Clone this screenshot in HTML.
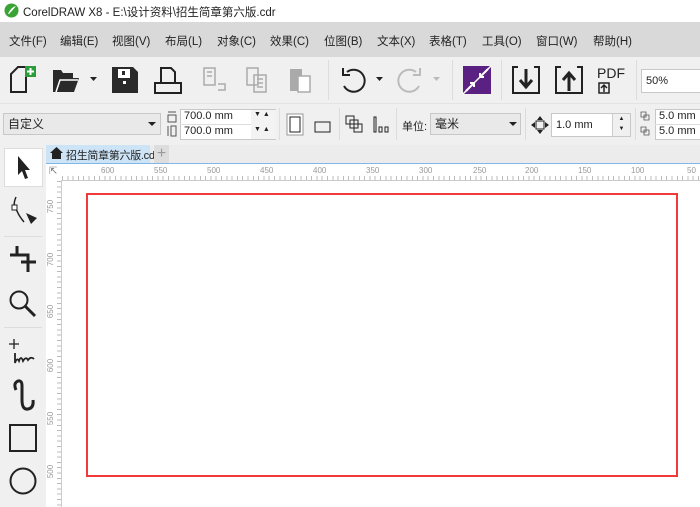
<!DOCTYPE html>
<html><head><meta charset="utf-8"><style>
*{margin:0;padding:0;box-sizing:border-box}
body{width:700px;height:507px;overflow:hidden;background:#f0f0f0;font-family:"Liberation Sans","Noto Sans CJK SC",sans-serif;position:relative;font-size:12px;color:#222}
.a{position:absolute}
.menu span{position:absolute;top:11px;font-size:11.5px;color:#222}
.inp{position:absolute;background:#fff;border:1px solid #c8c8c8;font-size:11px;padding-left:4px;line-height:18px}
.rl{position:absolute;font-size:8px;color:#999}
svg{position:absolute;overflow:visible}
</style></head><body>
<div class="a" style="left:0;top:0;width:700px;height:22px;background:#fff"></div>
<svg style="left:4px;top:3px" width="15" height="15"><circle cx="7.5" cy="7.5" r="7" fill="#3aa335"/><path d="M4 11 Q7 4 12 3 Q9 7 5 11Z" fill="#fff"/></svg>
<div class="a" style="left:23px;top:4px;font-size:11.5px">CorelDRAW X8 - E:\设计资料\招生简章第六版.cdr</div>
<div class="a menu" style="left:0;top:22px;width:700px;height:35px;background:#d9d9d9">
<span style="left:9px">文件(F)</span><span style="left:60px">编辑(E)</span><span style="left:112px">视图(V)</span><span style="left:165px">布局(L)</span><span style="left:217px">对象(C)</span><span style="left:270px">效果(C)</span><span style="left:324px">位图(B)</span><span style="left:377px">文本(X)</span><span style="left:429px">表格(T)</span><span style="left:482px">工具(O)</span><span style="left:536px">窗口(W)</span><span style="left:593px">帮助(H)</span>
</div>
<svg style="left:10px;top:66px" width="30" height="28"><path d="M1 26V8L8 1H16V26Z" fill="none" stroke="#222" stroke-width="2"/><rect x="15" y="0" width="11" height="11" fill="#2a9d3a"/><path d="M20.5 2V9M17 5.5H24" stroke="#fff" stroke-width="2"/></svg>
<svg style="left:52px;top:68px" width="40" height="26"><path d="M1 24V2H9L11 5H21V10H27L22 24Z" fill="#2a2a2a"/><path d="M4 24L8 12H26" fill="none" stroke="#fff" stroke-width="1.5"/><path d="M38 9H45L41.5 13Z" fill="#222"/></svg>
<svg style="left:111px;top:66px" width="28" height="28"><path d="M1 1H22L27 6V27H1Z" fill="#2a2a2a"/><rect x="7" y="3" width="12" height="9" fill="#fff"/><rect x="11" y="5" width="3" height="4" fill="#2a2a2a"/><rect x="12" y="15" width="3" height="3" fill="#fff"/></svg>
<svg style="left:154px;top:67px" width="28" height="27"><path d="M7 15V1H17L21 5V15M1 16H27V26H1Z" fill="none" stroke="#222" stroke-width="2"/></svg>
<svg style="left:203px;top:67px" width="28" height="26"><path d="M1 1H12V18H1ZM4 5H9M4 9H9M15 17H22V23H15" fill="none" stroke="#aaa" stroke-width="1.5"/></svg>
<svg style="left:246px;top:67px" width="28" height="26"><path d="M1 1H12V18H1ZM8 8H20V25H8ZM11 12H17M11 16H17M11 20H17" fill="none" stroke="#aaa" stroke-width="1.5"/></svg>
<svg style="left:289px;top:67px" width="28" height="26"><rect x="1" y="2" width="12" height="22" fill="#aaa"/><rect x="9" y="9" width="12" height="16" fill="#fff" stroke="#aaa" stroke-width="1.5"/></svg>
<div class="a" style="left:328px;top:60px;width:1px;height:40px;background:#ddd"></div>
<svg style="left:340px;top:67px" width="45" height="28"><path d="M7 5 A11 11 0 1 1 4 19" fill="none" stroke="#222" stroke-width="2"/><path d="M3 1V8H10" fill="none" stroke="#222" stroke-width="2"/><path d="M36 10H43L39.5 14Z" fill="#222"/></svg>
<svg style="left:397px;top:67px" width="45" height="28"><path d="M19 5 A11 11 0 1 0 22 19" fill="none" stroke="#bbb" stroke-width="2"/><path d="M23 1V8H16" fill="none" stroke="#bbb" stroke-width="2"/><path d="M36 10H43L39.5 14Z" fill="#bbb"/></svg>
<div class="a" style="left:452px;top:60px;width:1px;height:40px;background:#ddd"></div>
<svg style="left:463px;top:66px" width="28" height="28"><rect width="28" height="28" fill="#5a2182"/><path d="M0 28L28 0" stroke="#fff" stroke-width="1.5"/><path d="M3 25L11 17M7 17H11V21M25 3L17 11M17 7V11H21" fill="none" stroke="#fff" stroke-width="2"/></svg>
<div class="a" style="left:501px;top:60px;width:1px;height:40px;background:#ddd"></div>
<svg style="left:512px;top:66px" width="28" height="28"><path d="M6 1H1V27H27V1H22" fill="none" stroke="#222" stroke-width="2"/><path d="M14 3V20M8 14L14 21L20 14" fill="none" stroke="#222" stroke-width="3"/></svg>
<svg style="left:555px;top:66px" width="28" height="28"><path d="M6 1H1V27H27V1H22" fill="none" stroke="#222" stroke-width="2"/><path d="M14 25V8M8 14L14 7L20 14" fill="none" stroke="#222" stroke-width="3"/></svg>
<div class="a" style="left:597px;top:65px;font-size:14px;color:#222">PDF</div>
<svg style="left:598px;top:82px" width="12" height="12"><path d="M1 11V1H11V11ZM6 3V10M3 6L6 3L9 6" fill="none" stroke="#222" stroke-width="1.5"/></svg>
<div class="a" style="left:636px;top:60px;width:1px;height:40px;background:#ddd"></div>
<div class="inp" style="left:641px;top:69px;width:70px;height:24px;line-height:22px">50%</div>
<div class="a" style="left:0;top:103px;width:700px;height:1px;background:#e3e3e3"></div>
<div class="inp" style="left:3px;top:113px;width:158px;height:22px;background:#e9e9e9;line-height:20px;font-size:12px">自定义</div>
<svg style="left:148px;top:122px" width="8" height="5"><path d="M0 0H8L4 4Z" fill="#222"/></svg>
<svg style="left:167px;top:110px" width="10" height="28"><path d="M1 2H9M1 5H9V12H1Z M1 16V26M4 16H9V26H4Z" fill="none" stroke="#555" stroke-width="1"/></svg>
<div class="inp" style="left:180px;top:109px;width:96px;height:31px;padding:0"></div>
<div class="a" style="left:184px;top:110px;font-size:11px">700.0 mm</div>
<div class="a" style="left:184px;top:125px;font-size:11px">700.0 mm</div>
<div class="a" style="left:180px;top:124px;width:96px;height:1px;background:#ddd"></div>
<div class="a" style="left:251px;top:110px;width:25px;height:29px;background:#f3f3f3"></div>
<div class="a" style="left:254px;top:111px;font-size:7px">▼ ▲</div>
<div class="a" style="left:254px;top:126px;font-size:7px">▼ ▲</div>
<div class="a" style="left:279px;top:108px;width:1px;height:32px;background:#ddd"></div>
<svg style="left:286px;top:113px" width="50" height="22"><rect x="1" y="1" width="16" height="21" fill="#fff" stroke="#999"/><rect x="4" y="4" width="10" height="15" fill="none" stroke="#222"/><rect x="29" y="9" width="15" height="10" fill="none" stroke="#222"/></svg>
<div class="a" style="left:339px;top:108px;width:1px;height:32px;background:#ddd"></div>
<svg style="left:345px;top:115px" width="50" height="20"><path d="M1 1H9V9H1ZM5 5H13V13H5ZM9 9H17V17H9Z" fill="none" stroke="#222"/><path d="M29 2V17H31V2ZM34 12V17H37V12ZM40 12V17H43V12Z" fill="none" stroke="#222"/></svg>
<div class="a" style="left:396px;top:108px;width:1px;height:32px;background:#ddd"></div>
<div class="a" style="left:402px;top:118px;font-size:11px">单位:</div>
<div class="inp" style="left:430px;top:113px;width:91px;height:22px;background:#e9e9e9;line-height:20px;font-size:12px">毫米</div>
<svg style="left:509px;top:122px" width="8" height="5"><path d="M0 0H8L4 4Z" fill="#222"/></svg>
<div class="a" style="left:525px;top:108px;width:1px;height:32px;background:#ddd"></div>
<svg style="left:531px;top:116px" width="18" height="18"><path d="M9 0L12 4H6ZM9 18L12 14H6ZM0 9L4 6V12ZM18 9L14 6V12Z" fill="#222"/><rect x="5" y="5" width="8" height="8" fill="none" stroke="#222"/></svg>
<div class="inp" style="left:551px;top:113px;width:80px;height:24px;line-height:22px;font-size:11px">1.0 mm</div>
<div class="a" style="left:612px;top:114px;width:18px;height:22px;background:#f0f0f0;border-left:1px solid #ccc;font-size:6px;text-align:center;line-height:10px">▲<br>▼</div>
<div class="a" style="left:635px;top:108px;width:1px;height:32px;background:#ddd"></div>
<svg style="left:640px;top:111px" width="14" height="28"><path d="M1 1H6V6H1ZM4 4H9V9H4ZM1 16H6V21H1ZM4 19H9V24H4Z" fill="none" stroke="#555" stroke-width=".8"/></svg>
<div class="inp" style="left:655px;top:109px;width:50px;height:31px;padding:0"></div>
<div class="a" style="left:659px;top:110px;font-size:11px">5.0 mm</div>
<div class="a" style="left:659px;top:125px;font-size:11px">5.0 mm</div>
<div class="a" style="left:655px;top:124px;width:50px;height:1px;background:#ddd"></div>
<div class="a" style="left:46px;top:145px;width:654px;height:18px;background:#ececec"></div>
<div class="a" style="left:46px;top:145px;width:104px;height:18px;background:#cde4f7"></div>
<svg style="left:50px;top:147px" width="13" height="12"><path d="M6.5 0L13 6H11V12H2V6H0Z" fill="#222"/></svg>
<div class="a" style="left:66px;top:147px;font-size:11px;white-space:nowrap;letter-spacing:-0.3px">招生简章第六版.cdr</div>
<div class="a" style="left:154px;top:145px;width:15px;height:18px;background:#ddd;color:#999;font-size:16px;text-align:center;line-height:18px">+</div>
<div class="a" style="left:46px;top:163px;width:654px;height:1px;background:#7fb8e8"></div>
<div class="a" style="left:46px;top:164px;width:654px;height:17px;background:#fff"></div>
<div class="a" style="left:46px;top:164px;width:16px;height:343px;background:#fff"></div>
<div class="a" style="left:62px;top:180px;width:638px;height:1px;background:#ccc"></div>
<div class="a" style="left:61px;top:180px;width:1px;height:327px;background:#ccc"></div>
<div class="a" style="left:62px;top:176px;width:638px;height:4px;background:repeating-linear-gradient(90deg,#bbb 0 1px,transparent 1px 5.3px)"></div>
<div class="a" style="left:57px;top:181px;width:4px;height:326px;background:repeating-linear-gradient(180deg,#bbb 0 1px,transparent 1px 5.3px)"></div>
<div class="a" style="left:49px;top:166px;font-size:10px;color:#777">⇱</div>
<div class="rl" style="left:101px;top:166px">600</div><div class="rl" style="left:154px;top:166px">550</div><div class="rl" style="left:207px;top:166px">500</div><div class="rl" style="left:260px;top:166px">450</div><div class="rl" style="left:313px;top:166px">400</div><div class="rl" style="left:366px;top:166px">350</div><div class="rl" style="left:419px;top:166px">300</div><div class="rl" style="left:473px;top:166px">250</div><div class="rl" style="left:525px;top:166px">200</div><div class="rl" style="left:578px;top:166px">150</div><div class="rl" style="left:631px;top:166px">100</div><div class="rl" style="left:687px;top:166px">50</div>
<div class="rl" style="left:44px;top:202px;transform:rotate(-90deg)">750</div>
<div class="rl" style="left:44px;top:255px;transform:rotate(-90deg)">700</div>
<div class="rl" style="left:44px;top:307px;transform:rotate(-90deg)">650</div>
<div class="rl" style="left:44px;top:361px;transform:rotate(-90deg)">600</div>
<div class="rl" style="left:44px;top:414px;transform:rotate(-90deg)">550</div>
<div class="rl" style="left:44px;top:467px;transform:rotate(-90deg)">500</div>
<div class="a" style="left:62px;top:181px;width:638px;height:326px;background:#fff"></div>
<div class="a" style="left:86px;top:193px;width:592px;height:284px;border:2px solid #f23a3a"></div>
<div class="a" style="left:4px;top:148px;width:39px;height:39px;background:#fff;border:1px solid #ddd"></div>
<svg style="left:17px;top:155px" width="14" height="26"><path d="M1 1V20L5 16L8 24L11 23L8 15H13Z" fill="#222"/></svg>
<svg style="left:9px;top:196px" width="30" height="32"><path d="M7 1Q3 10 8 15Q10 20 15 26" fill="none" stroke="#222" stroke-width="1.5"/><rect x="3" y="9" width="5" height="5" fill="#fff" stroke="#222"/><path d="M17 17L28 22L22 28Z" fill="#222"/></svg>
<div class="a" style="left:4px;top:236px;width:38px;height:1px;background:#ddd"></div>
<svg style="left:9px;top:245px" width="28" height="28"><path d="M8 1V10H1M8 10H19V22M12 17H27M19 22V27" fill="none" stroke="#222" stroke-width="3"/></svg>
<svg style="left:9px;top:290px" width="28" height="28"><circle cx="10" cy="10" r="8.5" fill="none" stroke="#222" stroke-width="2"/><path d="M16 16L26 26" stroke="#222" stroke-width="3"/></svg>
<div class="a" style="left:4px;top:327px;width:38px;height:1px;background:#ddd"></div>
<svg style="left:9px;top:339px" width="30" height="28"><path d="M5 0V10M0 5H10" stroke="#222" stroke-width="1.3"/><path d="M6 14V24Q8 18 10 22Q12 16 14 22Q17 17 19 21Q22 17 25 20" fill="none" stroke="#222" stroke-width="1.8"/></svg>
<svg style="left:10px;top:380px" width="26" height="32"><path d="M6 10Q3 3 8 1Q12 0 12 6V20Q12 30 18 29Q24 28 23 20" fill="none" stroke="#222" stroke-width="3"/></svg>
<svg style="left:9px;top:424px" width="28" height="28"><rect x="1" y="1" width="26" height="26" fill="none" stroke="#222" stroke-width="2"/></svg>
<svg style="left:9px;top:467px" width="28" height="28"><circle cx="14" cy="14" r="12.5" fill="none" stroke="#222" stroke-width="2"/></svg>
</body></html>
